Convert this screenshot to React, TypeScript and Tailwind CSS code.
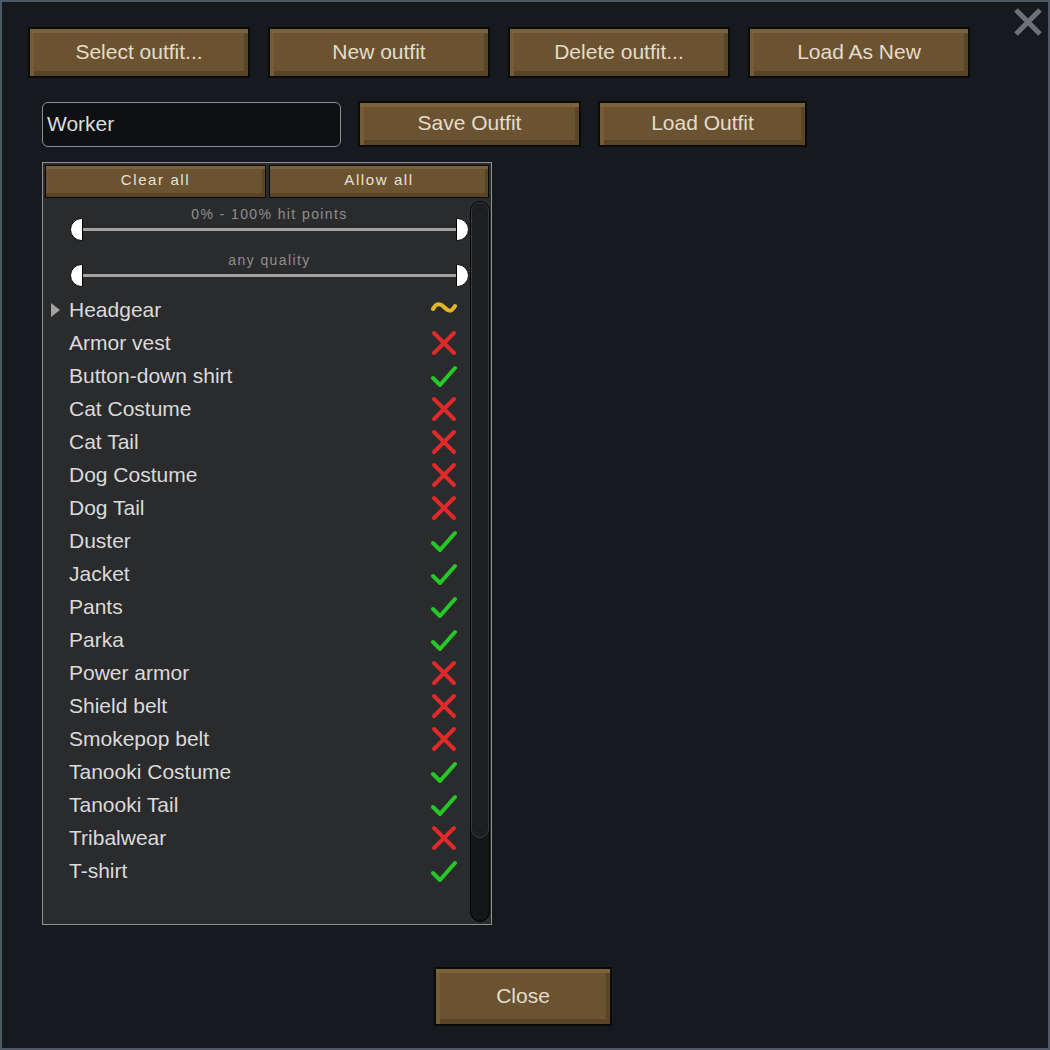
import React from 'react';

interface Apparel {
  name: string;
  state: 'allow' | 'deny' | 'partial';
  expandable?: boolean;
}

const apparel: Apparel[] = [
  { name: 'Headgear', state: 'partial', expandable: true },
  { name: 'Armor vest', state: 'deny' },
  { name: 'Button-down shirt', state: 'allow' },
  { name: 'Cat Costume', state: 'deny' },
  { name: 'Cat Tail', state: 'deny' },
  { name: 'Dog Costume', state: 'deny' },
  { name: 'Dog Tail', state: 'deny' },
  { name: 'Duster', state: 'allow' },
  { name: 'Jacket', state: 'allow' },
  { name: 'Pants', state: 'allow' },
  { name: 'Parka', state: 'allow' },
  { name: 'Power armor', state: 'deny' },
  { name: 'Shield belt', state: 'deny' },
  { name: 'Smokepop belt', state: 'deny' },
  { name: 'Tanooki Costume', state: 'allow' },
  { name: 'Tanooki Tail', state: 'allow' },
  { name: 'Tribalwear', state: 'deny' },
  { name: 'T-shirt', state: 'allow' },
];

const bevel =
  'bg-[#6b5331] border-2 border-[#0a0a0a] text-[#e4dccb] shadow-[inset_0_4px_0_#7c6238,inset_4px_0_0_#765c34,inset_0_-5px_0_#594425,inset_-4px_0_0_#5a4526]';

const smallBevel =
  'bg-[#6b5331] border border-[#0a0a0a] shadow-[inset_0_3px_0_#7c6238,inset_0_-4px_0_#594425,inset_-3px_0_0_#5a4526] text-[15px] tracking-[1.6px] text-[#e8e2d4] pb-[3px]';

function Button({ label, className }: { label: string; className: string }) {
  return (
    <button className={`${bevel} ${className} flex items-center justify-center text-[21px] leading-none pb-[3px]`}>
      {label}
    </button>
  );
}

function StateIcon({ state }: { state: Apparel['state'] }) {
  if (state === 'deny') {
    return (
      <svg width="26" height="26" viewBox="0 0 26 26">
        <path d="M3 3 L23 23 M23 3 L3 23" stroke="#e02a2a" strokeWidth="4" strokeLinecap="round" fill="none" />
      </svg>
    );
  }
  if (state === 'allow') {
    return (
      <svg width="26" height="26" viewBox="0 0 26 26">
        <path d="M2 15 L9 22 L24 5" stroke="#26c826" strokeWidth="4" strokeLinecap="round" strokeLinejoin="round" fill="none" />
      </svg>
    );
  }
  return (
    <svg width="26" height="26" viewBox="0 0 26 26">
      <path d="M2 12 C5 6, 9 6, 13 10 S20 16, 24 9" stroke="#e4b526" strokeWidth="4" strokeLinecap="round" fill="none" />
    </svg>
  );
}

function RangeSlider({ label, first }: { label: string; first?: boolean }) {
  return (
    <div className={`pl-[27px] ${first ? 'pt-[9px]' : 'pt-[12px]'}`}>
      <div className="text-center text-[14px] leading-[14px] tracking-[1.4px] text-[#8f8f8f]">{label}</div>
      <div className="flex items-center h-[23px] -mt-[3px]">
        <div className="w-[13px] h-[23px] bg-white border-[1.5px] border-black rounded-l-full" />
        <div className="flex-1 h-[3px] bg-[#a3a3a3]" />
        <div className="w-[13px] h-[23px] bg-white border-[1.5px] border-black rounded-r-full" />
      </div>
    </div>
  );
}

export default function App() {
  return (
    <div
      className="relative w-[1050px] h-[1050px] bg-[#161a1f] border-2 border-[#4f5865] overflow-hidden"
      style={{ fontFamily: '"Liberation Sans", Arial, sans-serif' }}
    >
      {/* close glyph */}
      <svg className="absolute right-[5px] top-[5px]" width="30" height="30" viewBox="0 0 30 30">
        <path d="M3 3 L27 27 M27 3 L3 27" stroke="#6d7178" strokeWidth="5" fill="none" />
      </svg>

      {/* Outfit actions */}
      <div className="flex gap-[18px] ml-[26px] mt-[25px]">
        <Button label="Select outfit..." className="w-[222px] h-[51px]" />
        <Button label="New outfit" className="w-[222px] h-[51px]" />
        <Button label="Delete outfit..." className="w-[222px] h-[51px]" />
        <Button label="Load As New" className="w-[222px] h-[51px]" />
      </div>

      {/* Name + save/load */}
      <div className="flex items-center gap-[17px] ml-[40px] mt-[23px]">
        <div className="w-[299px] h-[45px] rounded-md border border-[#8b8e93] bg-[#0e1013] flex items-center pl-[4px] pb-[1px] text-[21px] text-[#dcdcdc]">
          Worker
        </div>
        <Button label="Save Outfit" className="w-[223px] h-[46px]" />
        <Button label="Load Outfit" className="w-[209px] h-[46px]" />
      </div>

      {/* Filter panel */}
      <div className="ml-[40px] mt-[15px] w-[450px] h-[763px] border border-[#8f9093] bg-[#2a2b2d] flex flex-col">
        <div className="flex gap-[3px] p-[2px] pb-0">
          <button className={`w-[221px] h-[33px] ${smallBevel}`}>Clear all</button>
          <button className={`w-[220px] h-[33px] ${smallBevel}`}>Allow all</button>
        </div>

        <div className="flex flex-1">
          <div className="w-[426px]">
            <RangeSlider label="0% - 100% hit points" first />
            <RangeSlider label="any quality" />
            <div className="mt-[6px]">
              {apparel.map((item) => (
                <div key={item.name} className="flex items-center h-[33px] pr-[12px]">
                  <div className="w-[26px] flex justify-start pl-[8px]">
                    {item.expandable && (
                      <svg width="9" height="14" viewBox="0 0 9 14">
                        <path d="M0 0 L9 7 L0 14 Z" fill="#a2a2a2" />
                      </svg>
                    )}
                  </div>
                  <span className="flex-1 text-[21px] text-[#dadada] leading-none pb-[1px]">{item.name}</span>
                  <StateIcon state={item.state} />
                </div>
              ))}
            </div>
          </div>

          {/* scrollbar */}
          <div className="w-[20px] mt-[3px] mb-[2px] ml-[1px] rounded-full bg-[#151617] border border-black flex flex-col">
            <div className="h-[636px] rounded-full bg-[#1d1e20] border border-[#3a3b3e]" />
          </div>
        </div>
      </div>

      <div className="flex justify-center mt-[42px] pr-[4px]">
        <Button label="Close" className="w-[178px] h-[59px]" />
      </div>
    </div>
  );
}
